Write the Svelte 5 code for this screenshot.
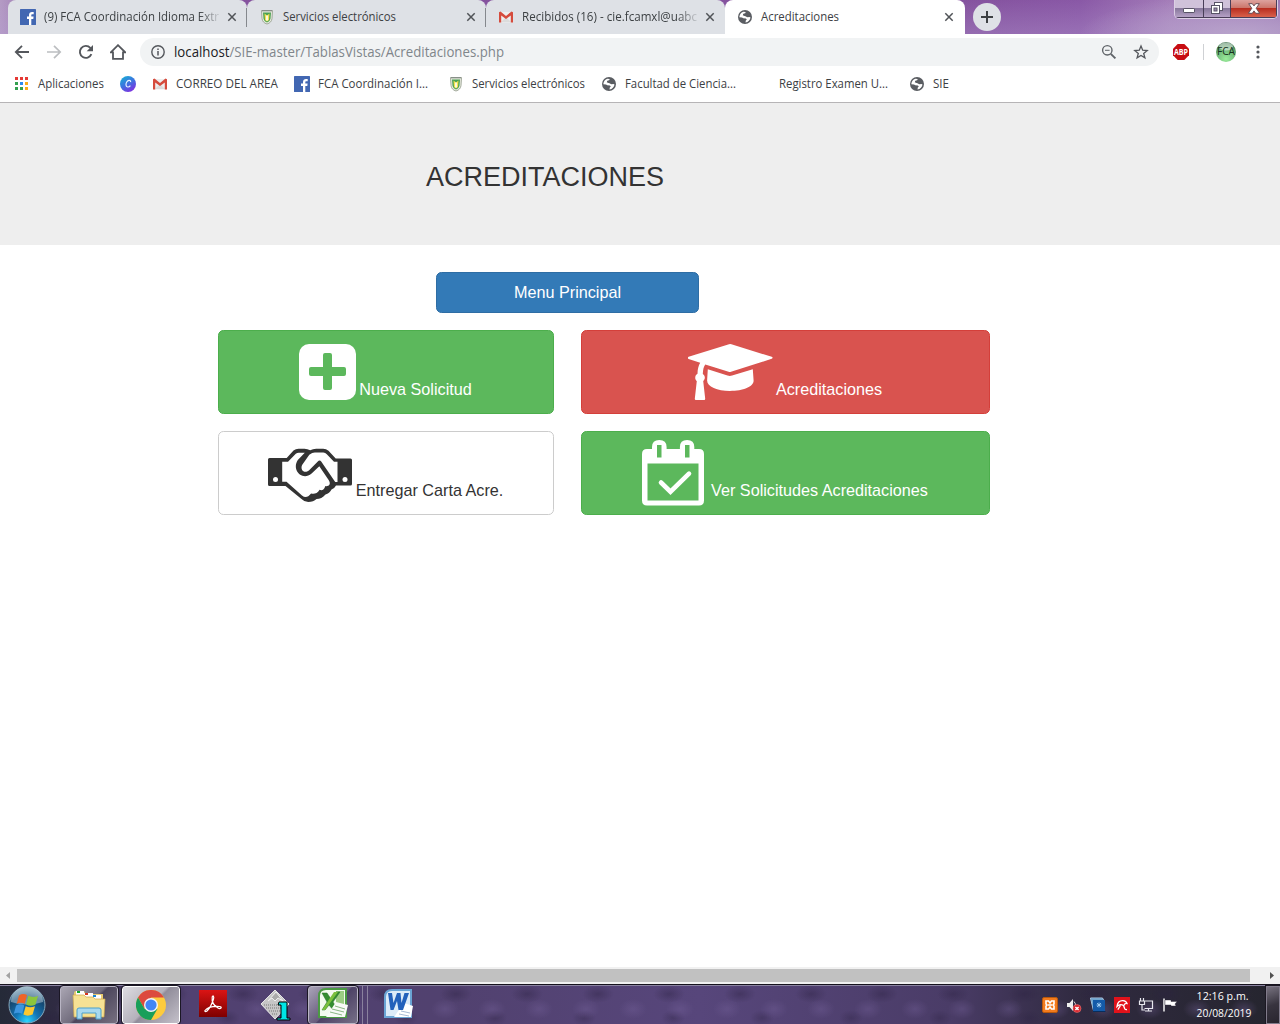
<script>
  const tabs = [
    { icon: 'facebook', text: '(9) FCA Coordinación Idioma Extr', width: 175, sep: true, fade: true },
    { icon: 'shield', text: 'Servicios electrónicos', width: 113, sep: true },
    { icon: 'gmail', text: 'Recibidos (16) - cie.fcamxl@uabc', width: 175, fade: true },
    { icon: 'globe', text: 'Acreditaciones', width: 78, active: true },
  ];

  const bookmarks = [
    { icon: 'apps', text: 'Aplicaciones', width: 66, slot: 66 },
    { icon: 'canva' },
    { icon: 'gmail', text: 'CORREO DEL AREA', width: 102, slot: 102 },
    { icon: 'facebook', text: 'FCA Coordinación I...', width: 110, slot: 114 },
    { icon: 'shield', text: 'Servicios electrónicos', width: 113, slot: 113 },
    { icon: 'globe', text: 'Facultad de Ciencia...', width: 111, slot: 114 },
    { icon: 'blank', text: 'Registro Examen U...', width: 109, slot: 114 },
    { icon: 'globe', text: 'SIE', width: 16, slot: 16 },
  ];

  const tray = ['xampp', 'mute', 'intel', 'avira', 'network', 'flag'];
</script>

{#snippet label(text, width, slot)}
  <svg class="label" width={slot} height="18" viewBox="0 0 {slot} 18">
    <text x="0" y="13" textLength={width} lengthAdjust="spacingAndGlyphs">{text}</text>
  </svg>
{/snippet}

{#snippet icon(name)}
  <svg class="icon" width="16" height="16" viewBox="0 0 16 16">
    {#if name === 'facebook'}
      <rect width="16" height="16" rx=".6" fill="#4267b2" />
      <path d="M9 16V10H7V7.600h2V6c0-2 1.200-3 3-3h1.700v2.200h-1.200c-1 0-1.200.5-1.200 1.200v1.200h2.300L13.300 10h-2v6z" fill="#fff" />
    {:else if name === 'shield'}
      <path d="M2.500 1.500h11l-.5 8c-.3 2.800-2 4.700-5 5.500-3-.8-4.700-2.700-5-5.500z" fill="#e9ecdf" stroke="#9aa293" stroke-width=".9" />
      <path d="M4 3.500h8l-.5 6c-.3 2-1.500 3.300-3.500 4-2-.7-3.200-2-3.500-4z" fill="#4ba153" />
      <path d="M5.500 4.500L8 6.500l2.500-2-.5 6.500-2 1.500L6 11z" fill="#f6e04b" />
      <path d="M8 6.500v5" stroke="#fff" stroke-width="1.600" />
      <path d="M3 1.800h10" stroke="#7d8580" />
    {:else if name === 'gmail'}
      <rect x="2" y="3" width="12" height="10.500" fill="#eee" />
      <path d="M3 13l5-5 5 5z" fill="#dcdcdc" />
      <path d="M1 3.200V13.500h2.200V6.400L8 10l4.800-3.600v7.100H15V3.200l-1.500-.6L8 6.900 2.500 2.600z" fill="#d54b3d" />
    {:else if name === 'globe'}
      <circle cx="8" cy="8" r="7" fill="#5a5d62" />
      <path d="M2.300 8.300C2.400 5.500 4 3.400 6.400 2.700L8.700 3 8.200 4.300l-1.900.5-.5 1.500L7.900 7l2.600 1.300 2-.2 1 .5c-.3 2.600-2.300 4.600-5 4.900l.3-1.900 1-1-.9-1.200L6.300 9.200 5 8.400z" fill="#fff" />
      <path d="M6.800 4.900l3.600-.2 1.800 2-.6 1.100-2.700-.7-2.200-.5z" fill="#5a5d62" />
    {:else if name === 'apps'}
      {#each [['#e53935', '#e53935', '#e53935'], ['#34a04f', '#2b8af0', '#fbab18'], ['#34a04f', '#34a04f', '#fbab18']] as row, y}
        {#each row as color, x}
          <rect x={1 + x * 5} y={1 + y * 5} width="3" height="3" fill={color} />
        {/each}
      {/each}
    {:else if name === 'canva'}
      <defs>
        <linearGradient id="canva" x1="0" y1="0" x2=".6" y2="1">
          <stop offset="0" stop-color="#13b7d2" /><stop offset=".55" stop-color="#3c73e0" /><stop offset="1" stop-color="#7a35e0" />
        </linearGradient>
      </defs>
      <circle cx="8" cy="8" r="8" fill="url(#canva)" />
      <path d="M10.600 6.200c.2-1.300-.6-1.900-1.600-1.800C7.200 4.600 5.800 7 6 9c.2 2.300 2.600 2.800 4.400.6" fill="none" stroke="#e8f4ff" stroke-width="1.200" />
    {:else if name === 'back'}
      <path d="M15 8H2M8 1.800L1.800 8 8 14.200" fill="none" stroke="#54575c" stroke-width="1.800" />
    {:else if name === 'forward'}
      <path d="M1 8h13M8 1.800L14.200 8 8 14.200" fill="none" stroke="#bcbec1" stroke-width="1.700" />
    {:else if name === 'reload'}
      <path d="M13.400 10.200A6 6 0 1 1 12.300 3.800L14 5.500" fill="none" stroke="#54575c" stroke-width="1.900" />
      <path d="M15 .9v6.300H8.700z" fill="#54575c" />
    {:else if name === 'home'}
      <path d="M.8 8.300L8 1.200l7.200 7.100H13v6.500H3V8.300z" fill="none" stroke="#54575c" stroke-width="1.800" />
    {:else if name === 'info'}
      <circle cx="8" cy="8" r="6.200" fill="none" stroke="#54575c" stroke-width="1.400" />
      <path d="M8 7v4.400M8 4.400v1.500" stroke="#54575c" stroke-width="1.500" />
    {:else if name === 'zoom'}
      <circle cx="6.300" cy="6.300" r="4.700" fill="none" stroke="#5f6368" stroke-width="1.400" />
      <path d="M9.800 9.800l4.600 4.600" stroke="#5f6368" stroke-width="1.900" /><path d="M4 6.300h4.600" stroke="#5f6368" />
    {:else if name === 'star'}
      <path d="M8 2l1.700 4.200 4.500.3-3.500 2.900 1.200 4.400L8 11.400l-3.900 2.400 1.200-4.400L1.800 6.500l4.500-.3z" fill="none" stroke="#54575c" stroke-width="1.300" />
    {:else if name === 'abp'}
      <path d="M4.700 0h6.600L16 4.700v6.600L11.300 16H4.700L0 11.300V4.700z" fill="#c70d12" />
      <text class="abp" x="8" y="11" text-anchor="middle" textLength="14" lengthAdjust="spacingAndGlyphs">ABP</text>
    {:else if name === 'dots'}
      {#each [3, 8, 13] as y}<circle cx="8" cy={y} r="1.600" fill="#54575c" />{/each}
    {:else if name === 'xampp'}
      <rect x=".5" y=".5" width="15" height="15" rx="1.500" fill="#f37b1d" stroke="#b9590c" />
      <path d="M4 4h2.500L8 6l1.500-2H12v3l-1 1 1 1v3H9.500L8 10l-1.500 2H4V9l1-1-1-1zM6 8h4" fill="none" stroke="#fff" stroke-width="1.600" />
    {:else if name === 'mute'}
      <path d="M1 6h2.500L7 2v12l-3.500-4H1z" fill="#eee" />
      <path d="M8 4.500q2 2 1.500 5" fill="none" stroke="#ddd" />
      <circle cx="11" cy="11.500" r="4" fill="#d9262c" stroke="#e88" stroke-width=".5" />
      <path d="M9.400 9.900l3.200 3.200m0-3.200l-3.200 3.200" stroke="#fff" stroke-width="1.400" />
    {:else if name === 'intel'}
      <path d="M.5 1h12l1 2v10l-2-.5-8 1z" fill="#5a91c4" stroke="#b1cae4" />
      <rect x="3" y="3" width="12" height="11" fill="#145aa8" />
      <path d="M1 1.500h11l1 1.500H3v9z" fill="#70a6cf" />
      <path d="M9 5.500v5M6.500 8h5M7 6l4 4m0-4l-4 4" stroke="#a9d4f7" stroke-width=".8" /><path d="M3 14.500h12.500" stroke="#082d5d" />
    {:else if name === 'avira'}
      <rect width="16" height="16" fill="#e1121b" />
      <path d="M3 9.500C3.500 5.500 6 3.500 9 3.700c2 .2 3.500 1.300 4 2.800-1.500-.2-2.800.5-3.300 2.300C7.500 7 5.200 7.200 3 9.500zM9.500 8.500l1.300 3.300q.8 1 2.200.7M6.500 8.500L3.800 12.700" fill="none" stroke="#fff" stroke-width="1.300" />
    {:else if name === 'network'}
      <path d="M6 4h8.500v7.500H6.500M10.500 11.500v2.500M7 14h7M2.500 1v3M5.500 1v3M1.500 4h5v3.500h-5zM4 7.500V13h3" fill="none" stroke="#e8e8ee" stroke-width="1.200" />
    {:else if name === 'flag'}
      <path d="M2 1.500v13" stroke="#f5f5f5" stroke-width="1.500" />
      <path d="M3 3h6v1.500h6l-2 2.500 1 2H9V8H3z" fill="#fff" stroke="#2a2635" stroke-width=".4" />
    {/if}
  </svg>
{/snippet}

<div class="screen">
  <div class="tabstrip">
    {#each tabs as tab}
      <div class="tab" class:active={tab.active} class:sep={tab.sep}>
        {@render icon(tab.icon)}
        <span class="title" class:fade={tab.fade}>{@render label(tab.text, tab.width, 175)}</span>
        <svg class="close" width="10" height="10" viewBox="0 0 10 10"><path d="M1.300 1.300l7.400 7.400m0-7.400L1.300 8.700" stroke="#505357" stroke-width="1.500" /></svg>
      </div>
    {/each}
    <div class="newtab">
      <svg width="28" height="28" viewBox="0 0 28 28"><path d="M14 8v12M8 14h12" stroke="#3c4043" stroke-width="2" /></svg>
    </div>
    <div class="controls">
      <span class="min"><svg width="12" height="5" viewBox="0 0 12 5"><rect x=".5" y=".5" width="11" height="4" rx=".6" fill="#fff" stroke="#585366" /></svg></span>
      <span class="max"><svg width="12" height="12" viewBox="0 0 12 12"><rect x="3.500" y=".5" width="8" height="8" fill="#fff" stroke="#585366" /><rect x=".5" y="3.500" width="8" height="8" fill="#fff" stroke="#585366" /><rect x="3" y="6" width="3" height="3" fill="#9a88ad" stroke="#585366" /></svg></span>
      <span class="quit"><svg width="12" height="11" viewBox="0 0 12 11"><path d="M.7.700h3.600L6 2.900 7.700.700h3.600L8.200 5.300l3.400 5H7.700L6 7.900l-1.700 2.400H.4l3.400-5z" fill="#fff" stroke="#5b4650" stroke-width=".9" /></svg></span>
    </div>
  </div>

  <div class="toolbar">
    {@render icon('back')}
    {@render icon('forward')}
    {@render icon('reload')}
    {@render icon('home')}
    <div class="omnibox">
      {@render icon('info')}
      <svg class="url" width="334" height="22" viewBox="0 0 334 22"><text x="0" y="16" textLength="330" lengthAdjust="spacingAndGlyphs"><tspan fill="#202124">localhost</tspan>/SIE-master/TablasVistas/Acreditaciones.php</text></svg>
      <span class="grow"></span>
      {@render icon('zoom')}
      {@render icon('star')}
    </div>
    <span class="ext">{@render icon('abp')}</span>
    <span class="rule"></span>
    <svg class="avatar" width="22" height="22" viewBox="0 0 22 22">
      <defs><radialGradient id="orb" cx=".5" cy=".85" r=".85"><stop offset="0" stop-color="#9aec9a" /><stop offset=".6" stop-color="#6db678" /><stop offset="1" stop-color="#3a6d49" /></radialGradient></defs>
      <circle cx="11" cy="11" r="10" fill="url(#orb)" />
      <ellipse cx="11" cy="5.500" rx="7" ry="4" fill="#fff" opacity=".5" />
      <text x="11" y="14.300" text-anchor="middle" textLength="18" lengthAdjust="spacingAndGlyphs">FCA</text>
    </svg>
    {@render icon('dots')}
  </div>

  <div class="bookmarks">
    {#each bookmarks as b}
      <div class="bookmark">
        {@render icon(b.icon)}
        {#if b.text}{@render label(b.text, b.width, b.slot)}{/if}
      </div>
    {/each}
  </div>

  <main>
    <header><h2>ACREDITACIONES</h2></header>
    <div class="menu"><button class="btn primary">Menu Principal</button></div>
    <div class="grid">
      <button class="btn success">
        <svg width="57" height="82" viewBox="299 331 57 82"><rect x="299" y="344" width="57" height="56" rx="10" fill="#fff" /><path d="M325 353h5q2 0 2 2v12h12q2 0 2 2v5q0 2-2 2h-12v12q0 2-2 2h-5q-2 0-2-2v-12h-12q-2 0-2-2v-5q0-2 2-2h12v-12q0-2 2-2z" fill="#5cb85c" /></svg>
        <span class="text">Nueva Solicitud</span>
      </button>
      <button class="btn danger">
        <svg width="85" height="82" viewBox="688 331 85 82" fill="#fff">
          <path d="M729 344.200q1.200-.4 2.400 0l40.300 12.600q1.900 1 0 2L731 371.800q-1.200.4-2.400 0l-23.300-7.400c-1.600 2-2.300 5-2.500 9.500 2.200 1.400 3 4.700.4 7.200l2 17.700q0 1.200-1 1.200h-8.300q-1.200 0-1.100-1.200l2-17.700c-2.600-2.500-1.700-6 .7-7.300.1-4.500.9-8.200 2.700-11.100l-11.600-3.800q-1.900-1.100 0-2.100z" />
          <path d="M707.800 369.300l19.700 6.300q2.300.7 4.600 0l20.700-6.300.8 11.200c.2 6.200-10.500 10.400-23.800 10.400-12.400 0-22.800-4.200-22.700-10.400z" />
        </svg>
        <span class="text">Acreditaciones</span>
      </button>
      <button class="btn plain">
        <svg class="shake" width="85" height="82" viewBox="267.500 432 85 82">
          <path d="M269 458h17.200l6.800-7.600q2.200-1.700 5-1.700h6q3 0 5.700 1.500 2.600-1.500 6-1.500h7q3 0 5.300 2l7.200 7.800H350q1.500 0 1.500 1.500v24q0 1.500-1.500 1.500h-14.500q-1.500 3-4.500 4-2 4-6 5-4 4.500-9 4.500-3 3-8.300 3-4 0-7-3.200L285 486h-16q-1.500 0-1.500-1.500v-25q0-1.500 1.500-1.500z" fill="#333" />
          <path d="M281.700 461.800h5.800l7.800-8q1.300-1 3-1h6l-7 7.200c-6.500 10 4.500 21.500 13.800 13.500l7.700-7.200 9.500 14c3 5-1.500 6.500-3.500 5.700-1.200 4-3.500 4.800-5.700 3.700-2.500 4-5.500 4.500-8.500 3.800-3.300 4-6 4.500-9.100 2L286 481.800h-4.300z" fill="#fff" />
          <path d="M308.800 454.700q3-2.200 5.500-2.200h8.500q2 0 3.500 1.700l7.200 7.500h3.500v20.300h-2.300l-14-20.500c-1-1.400-2.500-1-3.400 0l-8.900 9c-4.500 3.500-9-.5-6.800-5.500z" fill="#fff" />
          <circle cx="275" cy="479.500" r="2.500" fill="#fff" /><circle cx="344.500" cy="479.500" r="2.500" fill="#fff" />
        </svg>
        <span class="text">Entregar Carta Acre.</span>
      </button>
      <button class="btn success calendar">
        <svg width="62" height="82" viewBox="641 432 62 82">
          <path d="M646 449h5v-2q0-7 7.300-7t7.300 7v2h13.300v-2q0-7 7.200-7t7.200 7v2h4.700q5 0 5 5v46.500q0 5-5 5h-52q-5 0-5-5V454q0-5 5-5z" fill="#fff" />
          <path d="M646.500 463.500h51v37h-51zM656 445h4.500v12.500H656zM684 445h4.500v12.500H684z" fill="#5cb85c" />
          <path d="M660 482.500l9.500 9.200 18.500-18" fill="none" stroke="#fff" stroke-width="4.600" stroke-linecap="round" />
        </svg>
        <span class="text">Ver Solicitudes Acreditaciones</span>
      </button>
    </div>
  </main>

  <div class="scrollbar">
    <svg width="17" height="17" viewBox="0 0 17 17"><path d="M10 5v7L6 8.500z" fill="#a3a3a3" /></svg>
    <div class="thumb"></div>
    <span class="grow"></span>
    <svg width="17" height="17" viewBox="0 0 17 17"><path d="M7 5v7l4-3.500z" fill="#505050" /></svg>
  </div>

  <div class="taskbar">
    <svg class="start" width="38" height="38" viewBox="0 0 38 38">
      <defs>
        <radialGradient id="start" cx=".5" cy=".95" r=".9"><stop offset="0" stop-color="#2cd7ff" /><stop offset=".35" stop-color="#1377b8" /><stop offset=".75" stop-color="#15476f" /><stop offset="1" stop-color="#6d93a9" /></radialGradient>
      </defs>
      <circle cx="19" cy="19" r="18" fill="url(#start)" stroke="#84a7bb" stroke-width="1" />
      <path d="M3 16a16 16 0 0 1 32 0q-16 5-32 0z" fill="#d5e5ee" opacity=".45" />
      <path d="M11 9.500q4-2.500 8-.5l-2.200 8.700q-4.500-2-8.200.2z" fill="#ee6428" />
      <path d="M20.300 9.800q4.200 2.200 9.700.2l-2.600 8.800q-5 2.200-9.300-.2z" fill="#8cc63c" />
      <path d="M8.100 19.500q4.300-2.200 8.200-.1l-2.200 8.300q-4.200-2-8.300.1z" fill="#3d96e0" />
      <path d="M17.700 20.200q4.300 2.200 9.300.1l-2.400 8.300q-5 2.200-9.200 0z" fill="#fcc830" />
    </svg>
    <div class="task explorer">
      <svg width="34" height="32" viewBox="0 0 34 32">
        <path d="M2 4q0-2 2-2h8l2 3h17v22H2z" fill="#e9cc71" />
        <path d="M4 2h8v4H4zM12 4h9v4h-9zM20 6h9v4h-9z" fill="#fff" />
        <path d="M5 2h3v2H5z" fill="#12a52c" /><path d="M13 4h3v2h-3z" fill="#d8351c" /><path d="M21 6h3v2h-3z" fill="#1685d5" />
        <path d="M1 6h11l2 2h7l2 2h10l-1 18H2z" fill="#f6e194" stroke="#cfa849" stroke-width=".7" />
        <path d="M5 30v-9q0-2 2-2h20q2 0 2 2v9h-5v-6H10v6z" fill="#a8d9ef" stroke="#4ca0cc" />
      </svg>
    </div>
    <div class="task chrome">
      <svg width="30" height="30" viewBox="0 0 30 30">
        <circle cx="15" cy="15" r="15" fill="#fdcb3d" />
        <path d="M2 7.500A15 15 0 0 1 28 7.500H15L8.500 18.800z" fill="#dc4a3e" />
        <path d="M2 7.500A15 15 0 0 0 15 30l6.500-11.300H8.500z" fill="#199f5a" />
        <circle cx="15" cy="15" r="7" fill="#f4f4f4" /><circle cx="15" cy="15" r="5.600" fill="#4285f4" />
      </svg>
    </div>
    <svg class="acrobat" width="28" height="27" viewBox="0 0 28 27">
      <defs><linearGradient id="pdf" x1="0" y1="0" x2="0" y2="1"><stop offset="0" stop-color="#db1414" /><stop offset="1" stop-color="#7e0000" /></linearGradient></defs>
      <rect width="28" height="27" fill="url(#pdf)" />
      <path d="M6 20.500c2-2.500 7-4.500 14.500-4 3.500.5 1 3-1.500 1.500-3.500-2-6.500-6-5.800-11 .8-2.500 2 0 1.300 2-1.500 5-4 9.500-6.500 12-1.500 1-2.500.5-2-.5z" fill="none" stroke="#fff" stroke-width="1.200" />
    </svg>
    <svg class="installer" width="31" height="32" viewBox="0 0 31 32">
      <path d="M15 1l14 14-14 15L1 15z" fill="#c6c6c6" stroke="#e5e5e5" />
      <path d="M8 12l8-9 7 9-5-3-3 3-3-3z" fill="#aaa" stroke="#eee" />
      <path d="M4 16h22M6 19h18M9 22h12M12 25h6" stroke="#777" stroke-dasharray="1 1" />
      <path d="M19 13h8v16h3v2H17v-2h4V16h-3z" fill="#00e5e5" stroke="#000" />
    </svg>
    <div class="task office">
      <svg width="30" height="30" viewBox="0 0 30 30">
        <path d="M1 8Q1 1 8 1h20v28H1z" fill="#f3faef" stroke="#4b9a43" stroke-width="2" /><path d="M18 3h8v14h-8z" fill="#9ccd83" />
        <path d="M4 5h5l4 6 5-7h4L15 14l5 8h-5l-4-5-4 5H4l5-8z" fill="#348d31" stroke="#246d28" stroke-width=".5" />
        <path d="M18 14l12 3-3 12H8z" fill="#f8faf7" /><path d="M17 18l10 3M14 21l12 3M12 24l12 3" stroke="#8bb784" />
        <path d="M16 4h4L7 22H4z" fill="#7cc03e" />
      </svg>
    </div>
    <span class="stack"></span>
    <svg class="word" width="29" height="29" viewBox="0 0 29 29">
      <path d="M1 8Q1 1 8 1h19v27H1z" fill="#dcebf8" stroke="#6aa4d4" stroke-width="2" />
      <path d="M20 14l9 3-2 11H10z" fill="#fff" /><path d="M17 22l9 2M15 25l10 2" stroke="#a8bad4" />
      <path d="M4 4h4l1.500 10L13 4h3.500l1 10L20.500 4H25l-6 17h-4.500L13 12l-3.500 9H6.500z" fill="#2361bb" />
    </svg>
    <span class="grow"></span>
    <div class="tray">{#each tray as t}{@render icon(t)}{/each}</div>
    <div class="clock">
      {@render label('12:16 p.m.', 55, 58)}
      {@render label('20/08/2019', 58, 58)}
    </div>
    <div class="peek"></div>
  </div>
</div>

<style>
  :global(body) { margin: 0; overflow: hidden; }
  .screen { width: 1280px; height: 1024px; display: flex; flex-direction: column; overflow: hidden; background: #fff; font-family: "Open Sans", "Noto Sans", sans-serif; }
  svg { display: block; flex: none; }
  .grow { flex: 1; }
  .label, .url { overflow: visible; }
  .label text { font-size: 12px; fill: #3c4043; }

  .tabstrip { height: 34px; box-sizing: border-box; padding-left: 8px; display: flex; flex: none; background: radial-gradient(ellipse 160px 40px at 1240px 34px, #b8a3cb, transparent), linear-gradient(transparent, #b79fd455), linear-gradient(90deg, #b49bc4 0, #84519d 60px, #84529e 960px, #8958a6 1080px, #a37bb8 1170px, #9670af 1280px); }
  .tab { width: 239px; height: 34px; box-sizing: border-box; display: flex; align-items: center; padding-left: 12px; background: #dee1e6; border-radius: 8px 8px 0 0; }
  .tab .icon { margin-right: 8px; }
  .tab.sep { background: linear-gradient(#85888d, #85888d) right 8px / 1px 19px no-repeat #dee1e6; }
  .tab.active { background: #fff; width: 240px; }
  .title { width: 175px; margin-right: 8px; }
  .fade { mask-image: linear-gradient(90deg, #000 155px, transparent 178px); }
  .newtab { width: 28px; height: 28px; margin: 3px 0 0 8px; border-radius: 50%; background: #dee1e6; }
  .controls { display: flex; box-sizing: border-box; width: 104px; height: 19px; margin-left: 173px; border: 1px solid #dccfe4; border-top: 0; border-radius: 0 0 5px 5px; overflow: hidden; }
  .controls span { height: 18px; box-sizing: border-box; display: flex; justify-content: center; align-items: center; border: 1px solid #493e58; border-width: 0 1px 1px 0; background: linear-gradient(#d0c2da 0 45%, #87779b 50%, #b5a1c5); }
  .controls .min { width: 29px; padding-top: 4px; }
  .controls .max { width: 27px; padding-bottom: 1px; }
  .controls .quit { width: 46px; padding-bottom: 1px; background: linear-gradient(#dda29e 0, #cc776c 45%, #b92e20 50%, #d9614b); }

  .toolbar { height: 36px; display: flex; flex: none; align-items: center; gap: 16px; padding-left: 14px; }
  .omnibox { width: 1019px; height: 28px; box-sizing: border-box; padding: 0 10px; margin-left: -2px; display: flex; align-items: center; border-radius: 14px; background: #f1f3f4; }
  .url { margin-left: 8px; }
  .url text { font-size: 14px; fill: #80868b; }
  .omnibox .grow + .icon { margin-right: 16px; }
  .ext { margin-left: -2px; }
  .abp { font: bold 8.500px "Open Sans", sans-serif; fill: #fff; }
  .rule { width: 1px; height: 16px; margin-left: -2px; background: #cfd1d4; }
  .avatar { margin: 0 -3px 0 -5px; }
  .avatar text { font-size: 10px; fill: #17301b; }

  .bookmarks { height: 33px; box-sizing: border-box; display: flex; flex: none; gap: 16px; padding: 0 0 4px 14px; align-items: center; border-bottom: 1px solid #b6b4b6; }
  .bookmark { display: flex; align-items: center; gap: 8px; }

  main { flex: 1; min-height: 0; font-family: "Liberation Sans", Arial, sans-serif; color: #333; }
  header { height: 142px; box-sizing: border-box; padding: 59px 0 0 426px; background: #eee; }
  h2 { margin: 0; font-size: 27px; line-height: 30px; font-weight: 500; }
  .menu { padding: 27px 0 17px 436px; }
  .btn { display: flex; justify-content: center; box-sizing: border-box; padding: 0; border: 1px solid; border-radius: 5.400px; font: 16.200px "Liberation Sans", Arial, sans-serif; color: #fff; gap: 3px; }
  .primary { width: 263px; height: 41px; align-items: center; background: #337ab7; border-color: #2e6da4; }
  .grid { display: grid; grid-template-columns: 336px 409px; gap: 17px 27px; padding-left: 218px; }
  .grid .btn { height: 84px; }
  .text { line-height: 20px; padding: 48px 1px 0 0; white-space: nowrap; }
  .success { background: #5cb85c; border-color: #4cae4c; }
  .danger { background: #d9534f; border-color: #d43f3a; }
  .plain { background: #fff; border-color: #ccc; color: #333; }
  .calendar { gap: 7px; }

  .scrollbar { height: 17px; display: flex; flex: none; align-items: center; background: #f1f1f1; }
  .thumb { width: 1233px; height: 13px; background: #c1c1c1; }

  .taskbar { height: 40px; box-sizing: border-box; display: flex; flex: none; align-items: center; padding-left: 8px; border-top: 1px solid #17131f; box-shadow: inset 0 1px #8a83a0;
    background: radial-gradient(ellipse 14px 10px at 22px 24px, #7a66a055, transparent) 0 0 / 47px 39px, radial-gradient(ellipse 16px 9px at 30px 9px, #2a204066, transparent) 0 0 / 71px 39px, radial-gradient(ellipse 12px 8px at 50px 33px, #2a204055, transparent) 0 0 / 89px 39px, linear-gradient(90deg, #252a38 0, #2f2b42 55px, #514171 190px, #51416f 450px, #57467b 700px, #4a3c67 950px, #302a40 1080px, #25252e 1280px); }
  .start { margin-right: 14px; }
  .task { width: 58px; height: 38px; box-sizing: border-box; display: flex; align-items: center; justify-content: center; border: 1px solid #b9b5c4; border-radius: 3px; outline: 1px solid #1b1725; background: linear-gradient(135deg, #aaa6b3, #716c7d 48%, #4c465c 52%, #777080); }
  .chrome { margin-left: 4px; border-color: #fff; background: linear-gradient(135deg, #dedde2, #b4b1bb 48%, #918d9b 52%, #c5c1ca); }
  .acrobat { margin: 0 33px 3px 19px; }
  .office { width: 50px; margin-left: 17px; background: linear-gradient(135deg, #aaa4b8, #665b7c 50%, #4d4266 52%, #777087); }
  .office svg { margin-bottom: 3px; }
  .stack { width: 10px; height: 38px; box-sizing: border-box; border-right: 1px solid #8a819e; background: linear-gradient(#8a819e, #8a819e) 4px 0 / 1px 38px no-repeat; }
  .word { margin: 0 0 3px 16px; }
  .tray { display: flex; gap: 8px; margin-right: 18px; }
  .clock { width: 58px; padding-top: 1px; margin-right: 12px; }
  .clock .label { height: 17px; margin-left: -1px; }
  .clock .label text { fill: #fff; }
  .peek { width: 14px; height: 38px; box-sizing: border-box; border: 1px solid #817b8b; outline: 1px solid #1b1822; background: linear-gradient(160deg, #77727f, #38343f 50%, #29252f); }
</style>
